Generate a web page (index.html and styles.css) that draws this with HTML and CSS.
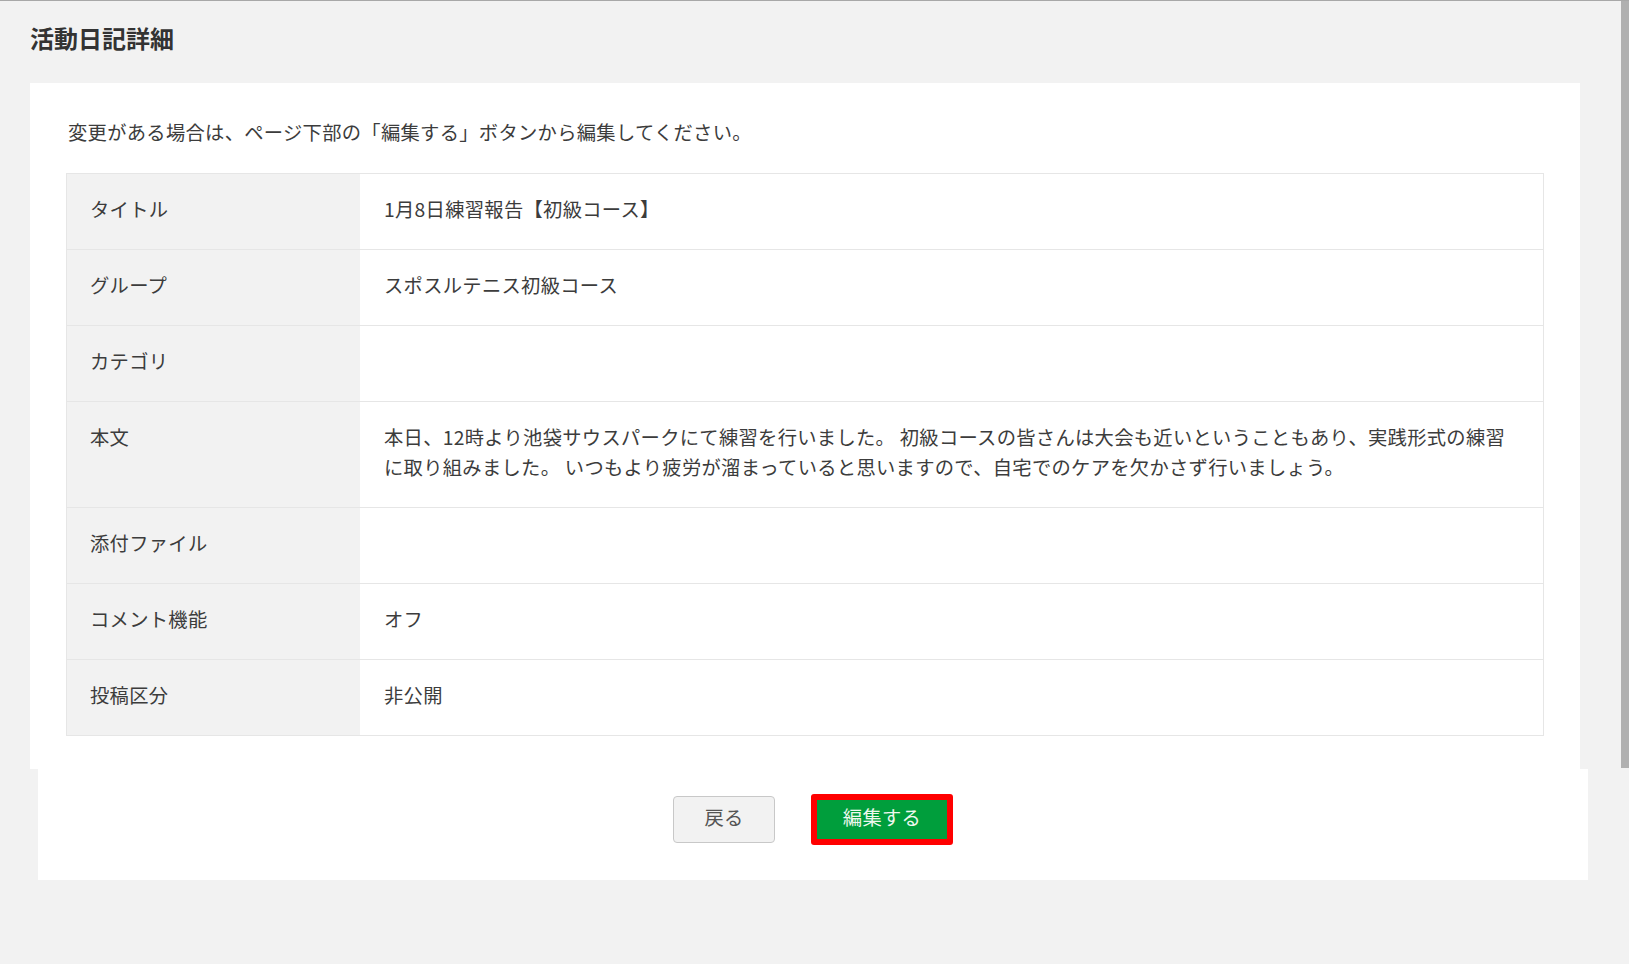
FILE: index.html
```html
<!DOCTYPE html>
<html lang="ja">
<head>
    <meta charset="UTF-8" />
    <meta name="viewport" content="width=device-width, initial-scale=1.0"/>

    <title>活動日記詳細</title>

    <link rel="stylesheet" href="styles.css">
</head>
<body>

<div class="page">
    <h1 class="page-title">活動日記詳細</h1>

    <div class="panel">
        <p class="lead">変更がある場合は、ページ下部の「編集する」ボタンから編集してください。</p>

        <table class="detail-table">
            <tr>
                <th>タイトル</th>
                <td>1月8日練習報告【初級コース】</td>
            </tr>
            <tr>
                <th>グループ</th>
                <td>スポスルテニス初級コース</td>
            </tr>
            <tr>
                <th>カテゴリ</th>
                <td></td>
            </tr>
            <tr>
                <th>本文</th>
                <td>本日、12時より池袋サウスパークにて練習を行いました。 初級コースの皆さんは大会も近いということもあり、実践形式の練習に取り組みました。 いつもより疲労が溜まっていると思いますので、自宅でのケアを欠かさず行いましょう。</td>
            </tr>
            <tr>
                <th>添付ファイル</th>
                <td></td>
            </tr>
            <tr>
                <th>コメント機能</th>
                <td>オフ</td>
            </tr>
            <tr>
                <th>投稿区分</th>
                <td>非公開</td>
            </tr>
        </table>
    </div>

    <div class="panel actions">
        <button type="button" class="btn btn-back">戻る</button>
        <button type="button" class="btn btn-edit">編集する</button>
    </div>
</div>

<div class="scrollbar"></div>

</body>
</html>
```

FILE: styles.css
```css
body {
    margin: 0;
    font-family: "Noto Sans CJK JP", "Noto Sans", sans-serif;
    background: #f2f2f2;
    color: #3c3c3c;
    border-top: 1px solid #a8a8a8;
    min-height: 963px;
}

.page {
    padding-left: 30px;
}

.page-title {
    margin: 0;
    padding-top: 19px;
    margin-bottom: 27px;
    font-size: 24px;
    line-height: 36px;
    font-weight: bold;
    color: #333;
}

/* Panels */
.panel {
    width: 1550px;
    box-sizing: border-box;
    background: #fff;
    padding: 35px 36px 33px 36px;
}

.lead {
    margin: 0 0 25px 2px;
    font-size: 19.3px;
    line-height: 30px;
    letter-spacing: 0.3px;
    transform: translateY(-1px);
}

/* Detail table */
.detail-table {
    width: 100%;
    border-collapse: collapse;
    border: 1px solid #e6e6e6;
    font-size: 19.3px;
    line-height: 30px;
    letter-spacing: 0.3px;
}

.detail-table th,
.detail-table td {
    border-top: 1px solid #e6e6e6;
    padding: 20px 24px 25px 24px;
    text-align: left;
    vertical-align: top;
    height: 30px;
}

.detail-table th {
    width: 246px;
    background: #f2f2f2;
    font-weight: normal;
    padding-left: 23px;
}

/* Buttons */
.actions {
    margin-left: 8px;
    display: flex;
    justify-content: center;
    align-items: center;
    gap: 36px;
    padding: 25px 0 35px 0;
}

.btn {
    font-family: inherit;
    font-size: 19.3px;
    line-height: 1;
    letter-spacing: 0.3px;
    padding: 0 0 3px 0;
    cursor: pointer;
    box-sizing: border-box;
}

.btn-back {
    width: 102px;
    height: 47px;
    background: #f2f2f2;
    border: 1px solid #c8c8c8;
    border-radius: 4px;
    color: #555;
}

.btn-edit {
    width: 142px;
    height: 51px;
    background: #009e3c;
    border: 6px solid #ff0000;
    border-radius: 3px;
    color: #eef8ee;
}

.scrollbar {
    position: absolute;
    top: 1px;
    right: 0;
    width: 8px;
    height: 767px;
    background: #b0b0b0;
}
```
